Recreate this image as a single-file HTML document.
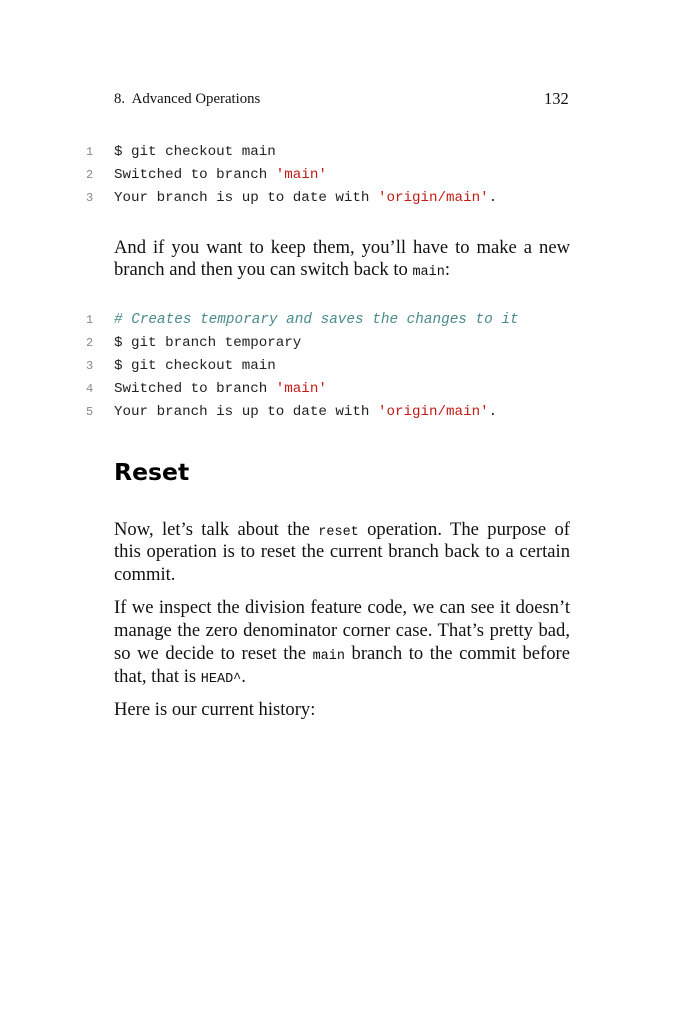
<!DOCTYPE html>
<html><head><meta charset="utf-8"><style>
body{margin:0;background:#fff;width:683px;height:1024px;position:relative;overflow:hidden}
.l{position:absolute;left:114px;height:23px;line-height:23px;white-space:nowrap;color:#111}
.s{font-family:"Liberation Serif",serif;font-size:18.6px}
.j{width:456px;text-align:justify;text-align-last:justify;white-space:normal}
.c{font-family:"Liberation Mono",monospace;font-size:14.2px;color:#222}
.n{position:absolute;left:86px;font-family:"Liberation Mono",monospace;font-size:12px;color:#888;height:23px;line-height:23px}
.r{color:#c41a16}
.cm{color:#4a8a8a;font-style:italic;font-size:14.35px}
code{font-family:"Liberation Mono",monospace;font-size:13.5px}
</style></head><body>
<div class="l s" style="top:88px;font-size:14.8px">8.&nbsp; Advanced Operations</div>
<div class="l s" style="top:87px;left:544px;font-size:16.5px">132</div>

<div class="n" style="top:141px">1</div><div class="l c" style="top:141px">$ git checkout main</div>
<div class="n" style="top:164px">2</div><div class="l c" style="top:164px">Switched to branch <span class="r">'main'</span></div>
<div class="n" style="top:187px">3</div><div class="l c" style="top:187px">Your branch is up to date with <span class="r">'origin/main'</span>.</div>

<div class="l s j" style="top:236px">And if you want to keep them, you’ll have to make a new</div>
<div class="l s" style="top:258px">branch and then you can switch back to <code>main</code>:</div>

<div class="n" style="top:309px">1</div><div class="l c cm" style="top:309px"># Creates temporary and saves the changes to it</div>
<div class="n" style="top:332px">2</div><div class="l c" style="top:332px">$ git branch temporary</div>
<div class="n" style="top:355px">3</div><div class="l c" style="top:355px">$ git checkout main</div>
<div class="n" style="top:378px">4</div><div class="l c" style="top:378px">Switched to branch <span class="r">'main'</span></div>
<div class="n" style="top:401px">5</div><div class="l c" style="top:401px">Your branch is up to date with <span class="r">'origin/main'</span>.</div>

<div class="l" style="top:454px;height:36px;line-height:36px;font-family:'DejaVu Sans',sans-serif;font-weight:bold;font-size:23.5px;color:#000">Reset</div>

<div class="l s j" style="top:518px">Now, let’s talk about the <code>reset</code> operation. The purpose of</div>
<div class="l s j" style="top:540px">this operation is to reset the current branch back to a certain</div>
<div class="l s" style="top:563px">commit.</div>

<div class="l s j" style="top:596px">If we inspect the division feature code, we can see it doesn’t</div>
<div class="l s j" style="top:619px">manage the zero denominator corner case. That’s pretty bad,</div>
<div class="l s j" style="top:642px">so we decide to reset the <code>main</code> branch to the commit before</div>
<div class="l s" style="top:665px">that, that is <code>HEAD^</code>.</div>

<div class="l s" style="top:698px">Here is our current history:</div>
</body></html>
